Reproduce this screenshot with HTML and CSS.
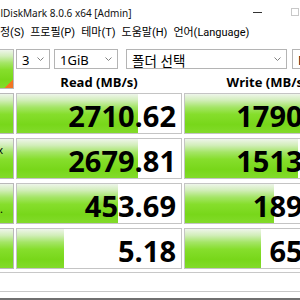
FILE: index.html
```html
<!DOCTYPE html>
<html lang="ko">
<head>
<meta charset="utf-8">
<title>CrystalDiskMark</title>
<link rel="stylesheet" href="styles.css">
</head>
<body>
<div class="window">
  <div class="titlebar">
    <span class="title"><span class="clip">Crystal</span>DiskMark 8.0.6 x64 [Admin]</span>
    <div class="controls">
      <span class="ctl"><span class="min"></span></span>
      <span class="ctl"><span class="max"></span></span>
      <span class="ctl"><svg width="10" height="10" viewBox="0 0 10 10"><path d="M0.5 0.5 9.5 9.5 M9.5 0.5 0.5 9.5" stroke="#222" stroke-width="1" fill="none"/></svg></span>
    </div>
  </div>
  <div class="menubar">
    <span class="menu"><span class="clip">설</span>정(S)</span>
    <span class="menu">프로필(P)</span>
    <span class="menu">테마(T)</span>
    <span class="menu">도움말(H)</span>
    <span class="menu">언어(Language)</span>
  </div>
  <div class="main">
    <div class="toprow">
      <div class="runbtn all"></div>
      <div class="setup">
        <div class="combos">
          <div class="combo c1"><span class="ctext">3</span><svg class="chev" width="7" height="4" viewBox="0 0 7 4"><path d="M0.5 0.5 3.5 3.5 6.5 0.5" stroke="#808080" fill="none"/></svg></div>
          <div class="combo c2"><span class="ctext">1GiB</span><svg class="chev" width="7" height="4" viewBox="0 0 7 4"><path d="M0.5 0.5 3.5 3.5 6.5 0.5" stroke="#808080" fill="none"/></svg></div>
          <div class="combo c3"><span class="ctext kr">폴더 선택</span><svg class="chev" width="7" height="4" viewBox="0 0 7 4"><path d="M0.5 0.5 3.5 3.5 6.5 0.5" stroke="#808080" fill="none"/></svg></div>
          <div class="combo c4"><span class="ctext">MB/s</span><svg class="chev" width="7" height="4" viewBox="0 0 7 4"><path d="M0.5 0.5 3.5 3.5 6.5 0.5" stroke="#808080" fill="none"/></svg></div>
        </div>
        <div class="heads">
          <div class="head">Read (MB/s)</div>
          <div class="head">Write (MB/s)</div>
        </div>
      </div>
    </div>

    <div class="row">
      <div class="runbtn"><span class="tick">&nbsp;</span><span class="tick">&nbsp;</span></div>
      <div class="cell" style="--w:121px">2710.62</div>
      <div class="cell" style="--w:116px">1790.47</div>
    </div>
    <div class="row">
      <div class="runbtn"><span class="tick">x</span><span class="tick">&nbsp;</span></div>
      <div class="cell" style="--w:121px">2679.81</div>
      <div class="cell" style="--w:113px">1513.62</div>
    </div>
    <div class="row">
      <div class="runbtn"><span class="tick">&nbsp;</span><span class="tick">.</span></div>
      <div class="cell" style="--w:101px">453.69</div>
      <div class="cell" style="--w:89px">189.85</div>
    </div>
    <div class="row">
      <div class="runbtn"><span class="tick">&nbsp;</span><span class="tick">&nbsp;</span></div>
      <div class="cell" style="--w:47px">5.18</div>
      <div class="cell" style="--w:76px">65.07</div>
    </div>

    <div class="comment"></div>
    <div class="foot"></div>
  </div>
</div>
</body>
</html>
```

FILE: styles.css
```css
* {
  box-sizing: border-box;
  margin: 0;
  padding: 0;
}

html,
body {
  width: 300px;
  height: 300px;
  overflow: hidden;
  background: #ffffff;
}

body {
  font-family: "Noto Sans", "Noto Sans CJK KR", sans-serif;
  color: #000;
}

.window {
  width: 412px;
  margin-left: -60px;
  display: flex;
  flex-direction: column;
}

.clip {
  display: inline-block;
  width: 0;
  direction: rtl;
  white-space: nowrap;
}

/* title bar */
.titlebar {
  height: 24px;
  display: flex;
  align-items: flex-start;
}

.title {
  padding-left: 63px;
  padding-top: 6px;
  font-size: 10px;
  line-height: 14px;
  white-space: nowrap;
  color: #111;
}

.controls {
  margin-left: auto;
  display: flex;
  height: 24px;
}

.ctl {
  width: 38px;
  height: 24px;
  display: flex;
  align-items: center;
  justify-content: center;
}

.min {
  width: 9px;
  height: 1px;
  background: #333;
}

.max {
  width: 8px;
  height: 8px;
  border: 1px solid #c8c8c8;
}

/* menu */
.menubar {
  height: 19px;
  display: flex;
  gap: 6px;
  padding-left: 60px;
  padding-top: 1px;
  font-family: Roboto, "Noto Sans CJK KR", sans-serif;
  font-size: 11px;
  line-height: 15px;
  white-space: nowrap;
}

/* main */
.main {
  margin-top: 6px;
  display: flex;
  flex-direction: column;
}

.toprow {
  display: grid;
  grid-template-columns: 74px 1fr;
  column-gap: 2px;
  height: 40px;
}

.runbtn {
  border: 1px solid #b9b9b9;
  background: linear-gradient(to bottom, #eef5ea 0%, #d2eeba 16%, #a4e566 34%, #86de2c 52%, #78d71a 78%, #82db2a 100%);
  display: flex;
  flex-direction: column;
  justify-content: center;
  align-items: flex-end;
  padding-right: 10px;
  padding-bottom: 3px;
  font-size: 11px;
  line-height: 14px;
}

.runbtn.all {
  background:
    linear-gradient(to bottom right, transparent 50%, #f27524 50%) right bottom / 9px 9px no-repeat,
    linear-gradient(to bottom, #eef5ea 0%, #d2eeba 16%, #a4e566 34%, #86de2c 52%, #78d71a 78%, #82db2a 100%);
}

.setup {
  display: flex;
  flex-direction: column;
}

.combos {
  height: 20px;
  display: flex;
}

.combo {
  height: 20px;
  border: 1px solid #b4b4b4;
  background: #fff;
  display: flex;
  align-items: center;
  justify-content: space-between;
  padding: 1px 5px 0 5px;
  font-size: 13px;
  line-height: 18px;
  white-space: nowrap;
}

.chev {
  flex: none;
  margin-top: -1px;
}

.c1 { width: 34px; }
.c2 { width: 64px; margin-left: 4px; }
.c3 { width: 161px; margin-left: 8px; }
.c4 { width: 58px; margin-left: 5px; }

.kr {
  font-family: "Noto Sans CJK KR", sans-serif;
  font-size: 13.5px;
}

.heads {
  height: 20px;
  display: grid;
  grid-template-columns: 166px 166px;
  column-gap: 2px;
}

.head {
  text-align: center;
  font-family: "Open Sans", sans-serif;
  font-weight: 700;
  font-size: 13px;
  line-height: 13px;
  padding-top: 7px;
  white-space: nowrap;
}

.row {
  margin-top: 4px;
  height: 41px;
  display: grid;
  grid-template-columns: 74px 166px 166px;
  column-gap: 2px;
}

.cell {
  border: 1px solid #c4c4c4;
  background:
    linear-gradient(to bottom, #eef5ea 0%, #d2eeba 16%, #a4e566 34%, #86de2c 52%, #78d71a 78%, #82db2a 100%) left top / var(--w) 100% no-repeat,
    #ffffff;
  text-align: right;
  padding: 4px 5px 0 0;
  font-family: "Open Sans", sans-serif;
  font-weight: 700;
  font-size: 29px;
  line-height: 35px;
  white-space: nowrap;
}

.comment {
  margin-top: 3px;
  height: 20px;
  border: 1px solid #c8c8c8;
  background: #fff;
}

.foot {
  margin-top: 6px;
  height: 2px;
  background: #707070;
}
```
